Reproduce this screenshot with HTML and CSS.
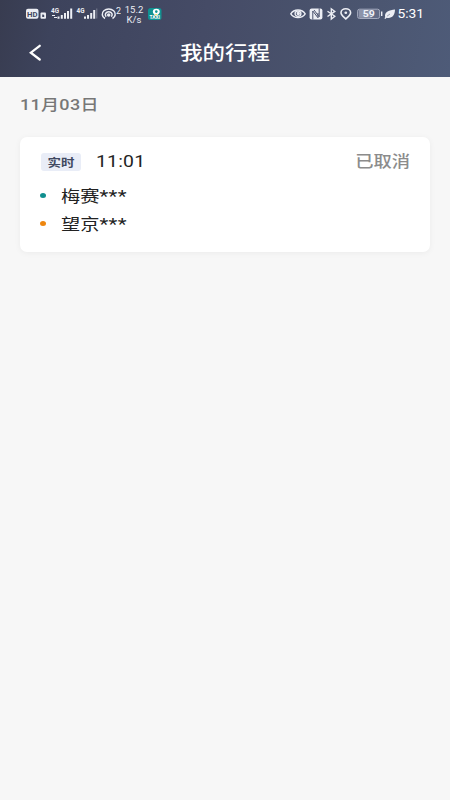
FILE: index.html
```html
<!DOCTYPE html>
<html lang="zh-CN">
<head>
    <meta charset="UTF-8">
    <meta name="viewport" content="width=device-width, initial-scale=1.0">
    <title>我的行程</title>
    <link rel="stylesheet" href="styles.css">
</head>
<body>
    <header class="header">
        <!-- Status bar -->
        <div class="status-bar">
            <div class="status-left">
                <svg width="72" height="16" viewBox="0 0 72 16" fill="#eceef4">
                    <rect x="0" y="2.8" width="12.5" height="10" rx="2"/>
                    <text class="hd-text" x="1" y="10.6" textLength="10.5" lengthAdjust="spacingAndGlyphs">HD</text>
                    <rect x="14.5" y="6.5" width="5.5" height="6.3" rx="1"/>
                    <path d="M16.2 11V8.5h1.2l.8.8V11z" fill="#414962"/>
                    <text class="net-text" x="25" y="7" textLength="8" lengthAdjust="spacingAndGlyphs">4G</text>
                    <path d="M26 9h3v1h-3zM28 11h3v1h-3zM31.5 10.5h2v2.300h-2zM34.800 9h2v3.800h-2zM38 7h2v5.800h-2zM41 5h2v7.800h-2zM44.200 2.500h2v10.300h-2z"/>
                    <text class="net-text" x="50.500" y="7" textLength="8" lengthAdjust="spacingAndGlyphs">4G</text>
                    <path d="M58 10.500h2v2.300h-2zM61 9h2v3.800h-2zM64.200 7h2v5.800h-2zM67.200 4h2v8.800h-2z"/>
                    <path d="M70.300 2.500h1v10h-1z" opacity=".35"/>
                </svg>
                <svg class="hotspot" width="20" height="16" viewBox="0 0 20 16" fill="none" stroke="#eceef4" stroke-width="1.500">
                    <path d="M4 12.500A6.500 5.200 0 1 1 11.500 12.500M5.300 10.600A3.400 2.800 0 1 1 10.200 10.600"/>
                    <ellipse cx="7.700" cy="9" rx="1" ry=".9" fill="#eceef4"/>
                    <text class="count-text" x="15" y="8.200" textLength="5" lengthAdjust="spacingAndGlyphs">2</text>
                </svg>
                <div class="speed"><span>15.2</span><span>K/s</span></div>
                <svg width="14" height="16" viewBox="0 0 14 16">
                    <rect x="0" y="2" width="13.500" height="12" rx="2.500" fill="#109291"/>
                    <path d="M8.200 10.500C6.500 8.500 4.800 7.600 4.800 5.700a3.500 3 0 0 1 7 0C11.800 7.600 9.800 8.500 8.200 10.500z" fill="#fff"/>
                    <circle cx="8.300" cy="5.600" r="1.300" fill="#109291"/>
                    <path d="M6.800 8.300h2.800L8.200 10.300z" fill="#e3d746"/>
                    <text class="taxi-text" x="1.500" y="13.100" textLength="10.500" lengthAdjust="spacingAndGlyphs">TAXI</text>
                </svg>
            </div>
            <div class="status-right">
                <svg width="16" height="16" viewBox="0 0 16 16" fill="none" stroke="#eceef4" stroke-width="1.400">
                    <path d="M.8 7.800C4 2.700 12 2.700 15.200 7.800 12 12.800 4 12.800 .8 7.800z"/>
                    <ellipse cx="8" cy="7.700" rx="2.900" ry="2.600"/>
                    <circle cx="8.300" cy="7.500" r="1" fill="#eceef4"/>
                </svg>
                <svg width="14" height="16" viewBox="0 0 14 16">
                    <rect x=".6" y="2.400" width="12.800" height="11" rx="2" fill="#eceef4"/>
                    <path d="M3.800 13.500V5L9 11.800V7M5 4L10.200 10.800V2.300" fill="none" stroke="#4a526d" stroke-width="1"/>
                </svg>
                <svg width="11" height="16" viewBox="0 0 11 16" fill="none" stroke="#eceef4" stroke-width="1.400">
                    <path d="M1.500 5.200L8.800 10.300 5.300 13V2.800L8.800 5.400 1.500 10.500"/>
                </svg>
                <svg width="12" height="16" viewBox="0 0 12 16" fill="none" stroke="#eceef4" stroke-width="1.600">
                    <path d="M5.800 13C3.200 10.500 1 9 1 6.700a4.800 3.900 0 0 1 9.600 0C10.600 9 8.400 10.500 5.800 13z"/>
                    <ellipse cx="5.800" cy="6.800" rx="1.400" ry="1.200" fill="#eceef4" stroke="none"/>
                </svg>
                <svg class="battery" width="26" height="16" viewBox="0 0 26 16">
                    <rect x=".6" y="3.200" width="22" height="9.300" rx="2" fill="#626b86" stroke="#a4aabd"/>
                    <path d="M2 4h12.500v7.800H2z" fill="#8d94aa"/>
                    <path d="M24 5.600h1.400v4.500H24z" fill="#eceef4"/>
                    <text class="battery-text" x="5.800" y="10.900" textLength="12" lengthAdjust="spacingAndGlyphs">59</text>
                </svg>
                <svg class="leaf" width="12" height="16" viewBox="0 0 12 16" fill="#eceef4">
                    <path d="M1.200 11.200C0 5.500 5.500 4.200 11 3.500 11 9.500 7.500 12.800 2.700 11.700L1.300 13 .4 12.200z"/>
                    <path d="M3 10.200L6 8" stroke="#4b5570" stroke-width=".5"/>
                </svg>
                <span class="clock">5:31</span>
            </div>
        </div>

        <!-- Title bar -->
        <div class="nav-bar">
            <svg class="back" width="14" height="18" viewBox="0 0 14 18" fill="none" stroke="#fff" stroke-width="2.300" stroke-linecap="round">
                <path d="M10.700 1.800L1.800 8.700 10.700 15.500"/>
            </svg>
            <h1 class="title">我的行程</h1>
        </div>
    </header>

    <main class="content">
        <div class="date">11月03日</div>
        <div class="card">
            <div class="card-top">
                <span class="tag"><span class="tag-text">实时</span></span>
                <span class="time">11:01</span>
                <span class="state">已取消</span>
            </div>
            <div class="place">
                <span class="dot dot-start"></span>
                <span class="place-name">梅赛<span class="mask">***</span></span>
            </div>
            <div class="place">
                <span class="dot dot-end"></span>
                <span class="place-name">望京<span class="mask">***</span></span>
            </div>
        </div>
    </main>
</body>
</html>
```
FILE: styles.css
```css
body {
    margin: 0;
    min-height: 100vh;
    background-color: #f7f7f7;
    font-family: Roboto, "Noto Sans CJK SC", sans-serif;
}
.header {
    height: 77px;
    background: linear-gradient(100deg, #383c50 0%, #3d435c 12%, #454b66 45%, #4a546e 75%, #4e5b78 100%);
    color: #fff;
}
.status-bar {
    display: flex;
    justify-content: space-between;
    height: 28px;
    padding: 0 26px;
    box-sizing: border-box;
}
.status-left,
.status-right {
    display: flex;
    align-items: center;
}
.status-left {
    color: #eceef4;
}
.hd-text {
    font-size: 7.5px;
    font-weight: bold;
    fill: #414962;
}
.net-text {
    font-size: 7px;
    font-weight: bold;
}
.count-text {
    font-size: 8.5px;
    fill: #eceef4;
    stroke: none;
}
.taxi-text {
    font-size: 4.5px;
    font-weight: bold;
    fill: #fff;
}
.battery-text {
    font-size: 9px;
    font-weight: bold;
    fill: #f0f1f6;
}
.hotspot {
    margin-left: 3px;
}
.speed {
    display: flex;
    flex-direction: column;
    align-items: center;
    width: 20px;
    margin: 1px 4px 0 3px;
    font-size: 9.5px;
    line-height: 11px;
    transform: scaleY(0.88);
}
.status-right {
    gap: 3px;
}
.battery {
    margin: 0 -2px 0 2px;
}
.leaf {
    margin-right: -1px;
}
.clock {
    margin: 0 0 0 -1px;
    font-size: 13.8px;
    line-height: 16px;
    transform: scaleY(0.88);
}
.nav-bar {
    display: grid;
    grid-template-columns: 60px 1fr 60px;
    align-items: center;
    height: 49px;
}
.back {
    margin-left: 29px;
}
/* text is wider than tall on this screen */
.title,
.date,
.tag-text,
.time,
.state,
.place-name {
    transform: scaleY(0.84);
}
.title {
    margin: 0;
    text-align: center;
    font-size: 22.4px;
    font-weight: 500;
    line-height: 30px;
}
.content {
    padding: 0 20px;
}
.date {
    padding: 16px 0 17px;
    color: #777;
    font-size: 18px;
    font-weight: 500;
    letter-spacing: 0.3px;
    line-height: 24px;
}
.card {
    margin-top: 3px;
    height: 115px;
    padding: 12px 20px 0;
    box-sizing: border-box;
    border-radius: 7px;
    background-color: #fff;
    box-shadow: 0 1px 6px rgba(0, 0, 0, 0.05);
}
.card-top {
    display: flex;
    align-items: center;
    height: 25px;
    margin-bottom: 7px;
}
.tag {
    display: flex;
    align-items: center;
    justify-content: center;
    width: 40px;
    height: 18px;
    margin-left: 1px;
    border-radius: 3px;
    background-color: #e9edf7;
    color: #414961;
    font-size: 13.5px;
    font-weight: bold;
}
.time {
    margin-left: 15px;
    color: #222;
    font-size: 19.4px;
    letter-spacing: 0.2px;
}
.state {
    margin: -3px 0 0 auto;
    color: #8c8c8c;
    font-size: 18.3px;
    font-weight: 500;
}
.place {
    display: flex;
    align-items: center;
    height: 28px;
}
.dot {
    width: 6px;
    height: 5px;
    border-radius: 50%;
}
.dot-start {
    background-color: #0f8f8f;
}
.dot-end {
    background-color: #ee860e;
}
.place-name {
    margin: 0 0 0 15px;
    color: #222;
    font-size: 19.2px;
}
.mask {
    font-size: 20.5px;
    letter-spacing: 0.3px;
}
```
